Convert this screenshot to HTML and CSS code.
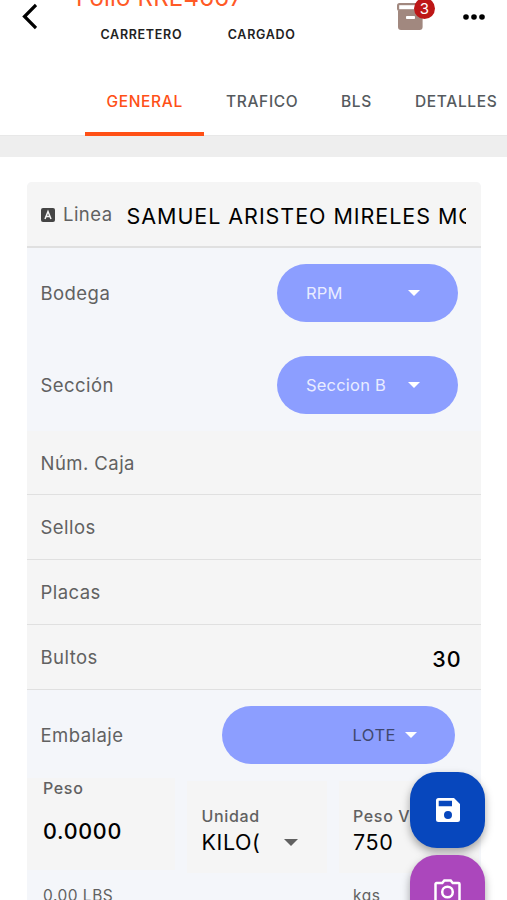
FILE: index.html
```html
<!DOCTYPE html>
<html lang="es">
<head>
<meta charset="utf-8">
<meta name="viewport" content="width=device-width, initial-scale=1">
<title>Folio RRE4667</title>
<link rel="stylesheet" href="styles.css">
</head>
<body>
<div class="screen">
  <header class="topbar">
    <svg class="back" viewBox="0 0 18 28"><path d="M17 3 5.500 14.500 17 26"/></svg>
    <div class="heading">
      <h1 class="title">Folio RRE4667</h1>
      <div class="chips"><span class="chip">CARRETERO</span><span class="chip">CARGADO</span></div>
    </div>
    <div class="archive">
      <svg class="archive-icon" viewBox="0 0 28 28"><rect x="1" y="1" width="26" height="8" rx="2.500" fill="#a1887f"/><rect x="3.200" y="3.200" width="22" height="4" fill="#fff"/><path d="M2 8.500h24.600v16.500a3 3 0 0 1-3 3H5a3 3 0 0 1-3-3z" fill="#a1887f"/><rect x="10" y="14" width="9" height="3" rx=".8" fill="#fff"/></svg>
      <span class="badge">3</span>
    </div>
    <svg class="more" viewBox="0 0 24 6"><circle cx="3" cy="3" r="2.800"/><circle cx="11" cy="3" r="2.800"/><circle cx="19" cy="3" r="2.800"/></svg>
  </header>
  <nav class="tabs">
    <span class="tab general active">GENERAL</span>
    <span class="tab trafico">TRAFICO</span>
    <span class="tab bls">BLS</span>
    <span class="tab detalles">DETALLES</span>
  </nav>
  <div class="band"></div>
  <main class="form">
    <div class="field linea">
      <svg class="alpha" viewBox="0 0 14 14"><rect width="14" height="14" rx="2" fill="#444"/><path d="M4 11 7 3.500 10 11M5 8.500h4" fill="none" stroke="#f5f5f5" stroke-width="1.500"/></svg>
      <span class="label">Linea</span>
      <span class="value name">SAMUEL ARISTEO MIRELES MORENO</span>
    </div>
    <div class="select-row">
      <span class="label">Bodega</span>
      <div class="pill"><span class="pill-text">RPM</span><i class="caret"></i></div>
    </div>
    <div class="select-row">
      <span class="label">Sección</span>
      <div class="pill"><span class="pill-text">Seccion B</span><i class="caret"></i></div>
    </div>
    <div class="field first"><span class="label">Núm. Caja</span></div>
    <div class="field"><span class="label">Sellos</span></div>
    <div class="field"><span class="label">Placas</span></div>
    <div class="field"><span class="label">Bultos</span><span class="value count">30</span></div>
    <div class="select-row packing">
      <span class="label">Embalaje</span>
      <div class="pill wide"><span class="pill-text dark">LOTE</span><i class="caret"></i></div>
    </div>
    <div class="weights">
      <div class="cell peso"><span class="small">Peso</span><span class="value amount">0.0000</span></div>
      <div class="cell unidad"><span class="small">Unidad</span><span class="value unit">KILO(</span><i class="caret gray"></i></div>
      <div class="cell vol"><span class="small">Peso Vol</span><span class="value vol-value">750</span></div>
    </div>
    <div class="hints"><span class="lbs">0.00 LBS</span><span class="kgs">kgs</span></div>
  </main>
  <div class="fabs">
    <button class="fab save" aria-label="Guardar"><svg viewBox="0 0 24 24"><path fill="#fff" fill-rule="evenodd" d="M2.500 0H18l6 6v15.500a2.500 2.500 0 0 1-2.500 2.500h-19A2.500 2.500 0 0 1 0 21.500v-19A2.500 2.500 0 0 1 2.500 0zM2.700 2.700v5.500h13.300V2.700zM12 13a4 4 0 1 0 0 8 4 4 0 0 0 0-8z"/></svg></button>
    <button class="fab camera" aria-label="Cámara"><svg viewBox="0 0 27 24"><path d="M2.500 4h5.800l2-2.500h6.400l2 2.500h5.800a1 1 0 0 1 1 1v16.500a1 1 0 0 1-1 1h-22a1 1 0 0 1-1-1V5a1 1 0 0 1 1-1z" fill="none" stroke="#fff" stroke-width="2.500"/><circle cx="13.500" cy="13" r="5.300" fill="none" stroke="#fff" stroke-width="2.500"/></svg></button>
  </div>
</div>
</body>
</html>
```
FILE: styles.css
```css
* { box-sizing: border-box; }
body { margin: 0; font-family: Inter, "Liberation Sans", sans-serif; background: #fff; }
.screen { position: relative; width: 507px; height: 900px; overflow: hidden; }
.topbar { display: flex; height: 68px; padding-left: 19px; }
.back { width: 18px; height: 28px; margin-top: 2px; fill: none; stroke: #000; stroke-width: 3.2; }
.heading { width: 359px; padding-left: 39px; }
.title { margin: -17px 0 0; font-size: 24px; line-height: 30px; font-weight: 400; letter-spacing: .2px; color: #ff5a26; white-space: nowrap; }
.chips { display: flex; gap: 45.500px; margin: 13px 0 0 24.500px; }
.chip { font-size: 12.500px; line-height: 17px; font-weight: 600; letter-spacing: .7px; color: #222; }
.archive { position: relative; width: 40px; height: 34px; }
.archive-icon { display: block; width: 28px; height: 28px; margin-top: 2px; }
.badge { position: absolute; left: 18px; top: -2px; width: 21px; height: 21px; border-radius: 50%; background: #bd1717; color: #fff; font-size: 15px; line-height: 22px; text-align: center; }
.more { width: 24px; height: 6px; margin: 14px 0 0 27px; }
.tabs { display: flex; height: 68px; padding-left: 85px; font-size: 15.500px; font-weight: 500; line-height: 67px; letter-spacing: .65px; color: #555a5e; white-space: nowrap; }
.tab { flex: none; }
.general { width: 119px; padding-left: 21.500px; }
.active { position: relative; z-index: 1; color: #ff5016; border-bottom: 4px solid #ff5016; }
.trafico { width: 137px; padding-left: 22px; }
.bls { width: 74px; }
.band { height: 22px; margin-top: -1px; background: #eee; border-top: 1px solid #e8e8e8; }
.form { width: 454px; margin: 25px 0 0 27px; background: #f4f6fa; border-radius: 5px 5px 0 0; overflow: hidden; color: #616161; }
.field { display: flex; align-items: center; height: 65px; padding: 0 13.500px; background: #f5f5f5; border-bottom: 1.500px solid #e0e0e0; }
.linea { height: 66px; padding: 0 15px 0 14px; border-bottom-width: 2px; }
.label { font-size: 18.500px; line-height: 24px; letter-spacing: .45px; }
.value { font-size: 21.500px; line-height: 26px; letter-spacing: .9px; font-weight: 400; color: #000; }
.alpha { width: 14px; height: 14px; margin: 1px 8px 0 0; flex: none; }
.name { margin-left: 14px; padding-top: 3px; letter-spacing: .95px; white-space: nowrap; overflow: hidden; }
.count { margin-left: auto; padding: 3px 6px 0 0; font-weight: 500; }
.select-row { display: flex; align-items: center; justify-content: space-between; height: 92px; padding: 0 23px 0 13.500px; }
.linea + .select-row { height: 91px; padding-bottom: 2px; }
.first { height: 64px; }
.pill { display: flex; align-items: center; justify-content: space-between; width: 181px; height: 58px; padding: 0 38px 0 29px; border-radius: 29px; background: #8c9eff; }
.pill-text { font-size: 16.500px; letter-spacing: .2px; color: #e9ecff; }
.wide { width: 233px; justify-content: flex-end; gap: 9px; }
.dark { color: #3f476e; letter-spacing: .5px; }
.caret { width: 0; height: 0; border: 6px solid transparent; border-top-color: #fff; border-bottom: 0; }
.gray { border-top-color: #616161; border-width: 7px 7px 0; }
.packing { height: 91px; padding-right: 26px; padding-bottom: 2px; }
.weights { display: flex; gap: 12px; height: 92px; }
.cell { background: #f5f5f5; height: 92px; }
.small { display: block; font-size: 16px; line-height: 20px; letter-spacing: .65px; font-weight: 500; white-space: nowrap; }
.peso { width: 148px; padding-left: 16px; margin-top: -3px; }
.amount { display: block; margin-top: 20px; font-weight: 500; letter-spacing: .7px; }
.unidad { display: grid; grid-template-columns: 82px 14px; align-content: start; align-items: center; row-gap: 3px; width: 140px; padding: 25px 0 0 14.500px; }
.unidad .small { grid-column: span 2; }
.unit { letter-spacing: .6px; }
.vol { width: 140px; padding: 25px 0 0 14px; }
.vol-value { display: block; margin-top: 3px; letter-spacing: .6px; }
.hints { display: flex; height: 40px; padding: 12px 0 0 16px; font-size: 15.500px; line-height: 22px; letter-spacing: .5px; }
.lbs { width: 310px; }
.fabs { position: absolute; left: 410px; top: 772px; display: flex; flex-direction: column; gap: 7px; }
.fab { display: flex; align-items: center; justify-content: center; width: 75px; height: 76px; padding: 0; border: 0; border-radius: 27px; box-shadow: 0 4px 9px rgba(0,0,0,.35); }
.fab svg { width: 24px; height: 24px; }
.save { background: #0747bd; }
.camera { background: #ab47bc; }
.camera svg { width: 27px; height: 24px; margin-top: -4px; }
```
